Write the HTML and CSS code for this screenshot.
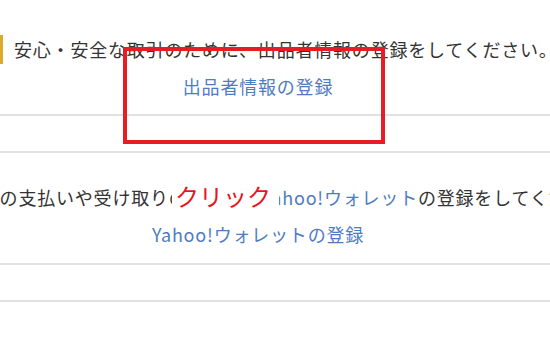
FILE: index.html
```html
<!DOCTYPE html>
<html lang="ja">
<head>
    <meta charset="UTF-8">
    <meta name="viewport" content="width=device-width, initial-scale=1.0">
    <title>登録のお願い</title>
    <link rel="stylesheet" href="styles.css">
</head>
<body>
    <div class="page">
        <div class="section">
            <div class="alert">安心・安全な取引のために、出品者情報の登録をしてください。</div>
            <div class="link-row"><a href="#">出品者情報の登録</a></div>
        </div>
        <div class="blank"></div>

        <div class="section second">
            <div class="notice">商品の支払いや受け取りのために、<a href="#">Yahoo!ウォレット</a>の登録をしてください。</div>
            <div class="link-row"><a href="#">Yahoo!ウォレットの登録</a></div>
        </div>
        <div class="blank"></div>

        <!-- annotations -->
        <div class="mark-box"></div>
        <div class="mark-label">クリック</div>
    </div>
</body>
</html>
```

FILE: styles.css
```css
body {
    margin: 0;
    padding: 0;
    background-color: #fff;
    font-family: "Noto Sans CJK JP", "Noto Sans", sans-serif;
    color: #333;
    overflow: hidden;
}

.page {
    position: relative;
    width: 550px;
    height: 350px;
    overflow: hidden;
}

.section {
    padding-top: 35px;
    padding-bottom: 13px;
    border-bottom: 2px solid #e2e2e2;
}

.section.second {
    padding-top: 30px;
    padding-bottom: 14px;
}

.blank {
    height: 35px;
    border-bottom: 2px solid #e2e2e2;
}

.alert {
    border-left: 3px solid #dcaa2a;
    padding-left: 11px;
    height: 29px;
    line-height: 29px;
    font-size: 18px;
    letter-spacing: 0.8px;
    white-space: nowrap;
}

.notice {
    height: 29px;
    line-height: 29px;
    font-size: 18px;
    letter-spacing: 0.8px;
    white-space: nowrap;
    margin-left: -38px;
}

.link-row {
    margin-top: 7px;
    height: 30px;
    line-height: 30px;
    font-size: 18px;
    letter-spacing: 0.8px;
    text-align: center;
    padding-right: 34px;
}

a {
    color: #4f7cc0;
    text-decoration: none;
}

.mark-box {
    position: absolute;
    left: 123px;
    top: 47px;
    width: 254px;
    height: 89px;
    border: 4px solid #e81c24;
}

.mark-label {
    position: absolute;
    left: 172px;
    top: 179px;
    padding: 0 8px 0 3px;
    background-color: #fff;
    color: #e8141e;
    font-size: 24px;
    line-height: 34px;
}
```
